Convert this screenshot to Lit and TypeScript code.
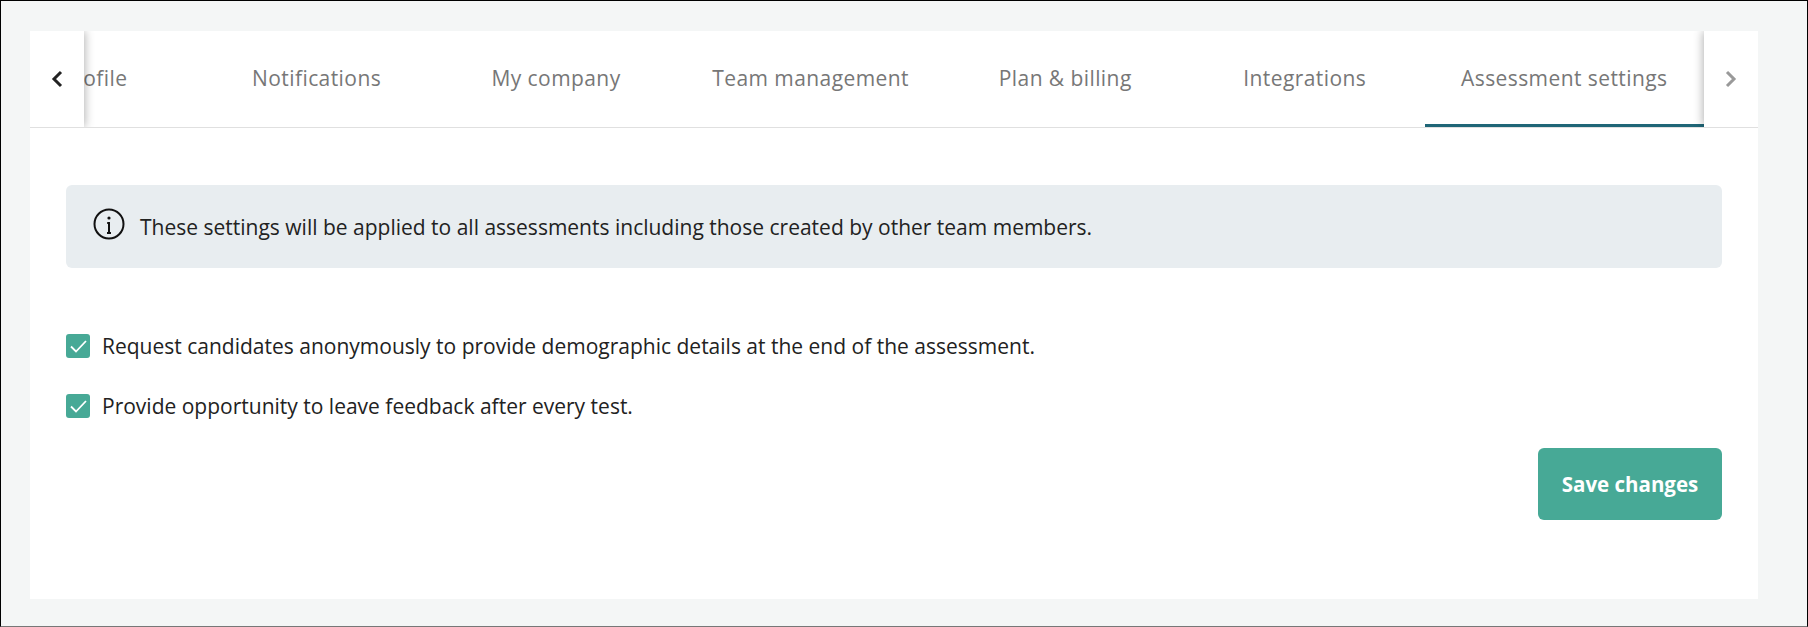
import { LitElement, html, css } from "lit";
import { customElement } from "lit/decorators.js";

const TABS = ["Profile", "Notifications", "My company", "Team management", "Plan & billing", "Integrations", "Assessment settings"];

@customElement("app-root")
export class AppRoot extends LitElement {
  static styles = css`
    :host {
      display: block;
      box-sizing: border-box;
      height: 627px;
      background: #f4f6f6;
      border: 1px solid #000;
      border-bottom-color: #777;
      padding: 30px 49px 27px 29px;
      font-family: "Open Sans", sans-serif;
      color: #222;
    }
    .card { background: #fff; height: 568px; display: flex; flex-direction: column; }
    .bar { display: flex; height: 97px; box-sizing: border-box; border-bottom: 1px solid #e0e0e0; flex: none; }
    .nav { width: 54px; flex: none; display: flex; align-items: center; justify-content: center; background: #fff; position: relative; z-index: 1; }
    .nav.l { box-shadow: 1px 0 9px rgba(0,0,0,.3); clip-path: inset(0 -14px 0 0); }
    .nav.r { box-shadow: -1px 0 9px rgba(0,0,0,.3); clip-path: inset(0 0 0 -14px); }
    .tabs { flex: 1; min-width: 0; display: flex; justify-content: flex-end; overflow: hidden; }
    .tab { flex: none; box-sizing: border-box; min-width: 239.5px; height: 96px; padding: 0 36.5px; font-size: 21px; font-weight: 500; letter-spacing: 0.42px; color: #777; display: flex; align-items: center; justify-content: center; white-space: nowrap; border-bottom: 3px solid transparent; }
    .tab.first { min-width: 205px; }
    .tab.active { border-bottom-color: #1f6677; }
    .body { padding: 57px 36px 0; display: flex; flex-direction: column; }
    .notice { height: 83px; background: #e8edf0; border-radius: 6px; display: flex; align-items: center; gap: 15px; padding-left: 27px; font-size: 21px; color: #222; }
    .notice svg { flex: none; margin-top: -6px; }
    .checks { display: flex; flex-direction: column; gap: 36px; margin-top: 66px; }
    .check { display: flex; align-items: center; gap: 12px; font-size: 21px; height: 24px; }
    .box { width: 24px; height: 24px; border-radius: 3px; background: #47a996; display: flex; align-items: center; justify-content: center; flex: none; }
    .actions { display: flex; justify-content: flex-end; margin-top: 30px; }
    .save { width: 184px; height: 72px; border: none; border-radius: 6px; background: #47a996; color: #fff; font: 700 20.5px "Open Sans", sans-serif; }
  `;

  render() {
    const tick = html`<svg width="17" height="13" viewBox="0 0 17 13"><path d="M1 6.5 L6 11.5 L16 1" fill="none" stroke="#fff" stroke-width="1.8"/></svg>`;
    return html`<div class="card">
      <div class="bar">
        <div class="nav l"><svg width="12" height="18" viewBox="0 0 12 18"><path d="M10 2 L3 9 L10 16" fill="none" stroke="#222" stroke-width="3"/></svg></div>
        <div class="tabs">${TABS.map((t, i) => html`<div class="tab ${i === 0 ? "first" : ""} ${i === TABS.length - 1 ? "active" : ""}">${t}</div>`)}</div>
        <div class="nav r"><svg width="12" height="18" viewBox="0 0 12 18"><path d="M2 2 L9 9 L2 16" fill="none" stroke="#999" stroke-width="3"/></svg></div>
      </div>
      <div class="body">
        <div class="notice">
          <svg width="32" height="32" viewBox="0 0 32 32"><circle cx="16" cy="16" r="14.5" fill="none" stroke="#111" stroke-width="2"/><circle cx="16" cy="10" r="1.6" fill="#111"/><path d="M14.2 15 H16 V24.5 M14 25 H18" fill="none" stroke="#111" stroke-width="2"/></svg>
          <span>These settings will be applied to all assessments including those created by other team members.</span>
        </div>
        <div class="checks">
          <div class="check"><span class="box">${tick}</span><span>Request candidates anonymously to provide demographic details at the end of the assessment.</span></div>
          <div class="check"><span class="box">${tick}</span><span>Provide opportunity to leave feedback after every test.</span></div>
        </div>
        <div class="actions"><button class="save">Save changes</button></div>
      </div>
    </div>`;
  }
}
